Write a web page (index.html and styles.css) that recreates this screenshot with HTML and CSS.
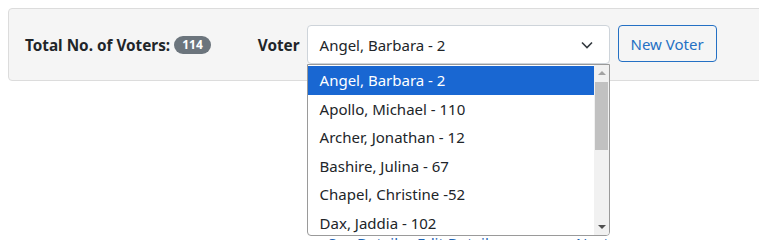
FILE: index.html
```html
<!DOCTYPE html>
<html>
<head>
<meta charset="utf-8">
<link rel="stylesheet" href="styles.css">
</head>
<body>
<div class="card">
  <div class="row">
    <div class="total">Total No. of Voters: <span class="badge">114</span></div>
    <label class="voter-label">Voter</label>
    <div class="select-wrap">
      <div class="select">
        <span>Angel, Barbara - 2</span>
        <svg class="chev" width="12" height="8" viewBox="0 0 12 8"><path d="M1 1.5 L6 6.5 L11 1.5" fill="none" stroke="#343a40" stroke-width="1.6"/></svg>
      </div>
      <div class="listbox">
        <div class="options">
          <div class="opt sel">Angel, Barbara - 2</div>
          <div class="opt">Apollo, Michael - 110</div>
          <div class="opt">Archer, Jonathan - 12</div>
          <div class="opt">Bashire, Julina - 67</div>
          <div class="opt">Chapel, Christine -52</div>
          <div class="opt">Dax, Jaddia - 102</div>
        </div>
        <div class="scrollbar">
          <div class="arrow up"></div>
          <div class="thumb"></div>
          <div class="arrow down"></div>
        </div>
      </div>
    </div>
    <button class="btn">New Voter</button>
  </div>
</div>
<div class="below">
  <a class="lnk">See Details · Edit Details</a>
  <a class="lnk right">Next ›</a>
</div>
</body>
</html>
```

FILE: styles.css
```css
html, body { overflow: hidden; }
body {
  margin: 8px;
  font-family: "Noto Sans", "Open Sans", sans-serif;
  color: #212529;
  background: #fff;
}
.card {
  margin-right: -30px;
  background: #f5f5f5;
  border: 1px solid #dcdcdc;
  border-radius: 4px;
  padding: 16px;
}
.row {
  display: flex;
  align-items: flex-start;
}
.total {
  font-weight: 700;
  font-size: 15.3px;
  height: 39px;
  display: flex;
  align-items: center;
  gap: 4px;
}
.badge {
  background: #6c757d;
  color: #fff;
  font-size: 12px;
  font-weight: 700;
  border-radius: 9px;
  padding: 0 8px;
  height: 18px;
  line-height: 18px;
  display: inline-block;
}
.voter-label {
  font-weight: 700;
  font-size: 15.3px;
  height: 39px;
  display: flex;
  align-items: center;
  margin-left: 47px;
  margin-right: 7px;
}
.select-wrap {
  position: relative;
  width: 303px;
}
.select {
  box-sizing: border-box;
  height: 39px;
  background: #fff;
  border: 1px solid #ced4da;
  border-radius: 4px;
  display: flex;
  align-items: center;
  justify-content: space-between;
  padding: 0 16px 0 12px;
  font-size: 15px;
}
.listbox {
  position: absolute;
  top: 39px;
  left: 0;
  width: 303px;
  height: 172px;
  box-sizing: border-box;
  background: #fff;
  border: 1px solid #9a9a9a;
  border-radius: 0 0 4px 4px;
  display: flex;
  overflow: hidden;
  z-index: 5;
}
.options {
  flex: 1;
  padding-top: 1px;
}
.opt {
  height: 28.5px;
  line-height: 28.5px;
  padding-left: 12px;
  font-size: 15px;
  white-space: nowrap;
}
.opt.sel {
  background: #1967d2;
  color: #fff;
}
.scrollbar {
  width: 15px;
  background: #f1f1f1;
  position: relative;
}
.thumb {
  position: absolute;
  left: 1px;
  right: 1px;
  top: 17px;
  height: 68px;
  background: #c1c1c1;
}
.arrow {
  position: absolute;
  left: 4px;
  width: 0;
  height: 0;
  border-left: 4px solid transparent;
  border-right: 4px solid transparent;
}
.arrow.up {
  top: 6px;
  border-bottom: 4px solid #a3a3a3;
}
.arrow.down {
  bottom: 6px;
  border-top: 4px solid #505050;
}
.btn {
  margin-left: 8px;
  height: 37px;
  width: 99px;
  background: transparent;
  border: 1px solid #2470c4;
  border-radius: 4px;
  color: #2470c4;
  font-family: "Noto Sans", "Open Sans", sans-serif;
  font-size: 15px;
  padding: 0;
}
.below {
  margin-top: 152px;
  display: flex;
  padding-left: 320px;
  gap: 80px;
  font-size: 15px;
}
.lnk { color: #1e63b4; }
```
